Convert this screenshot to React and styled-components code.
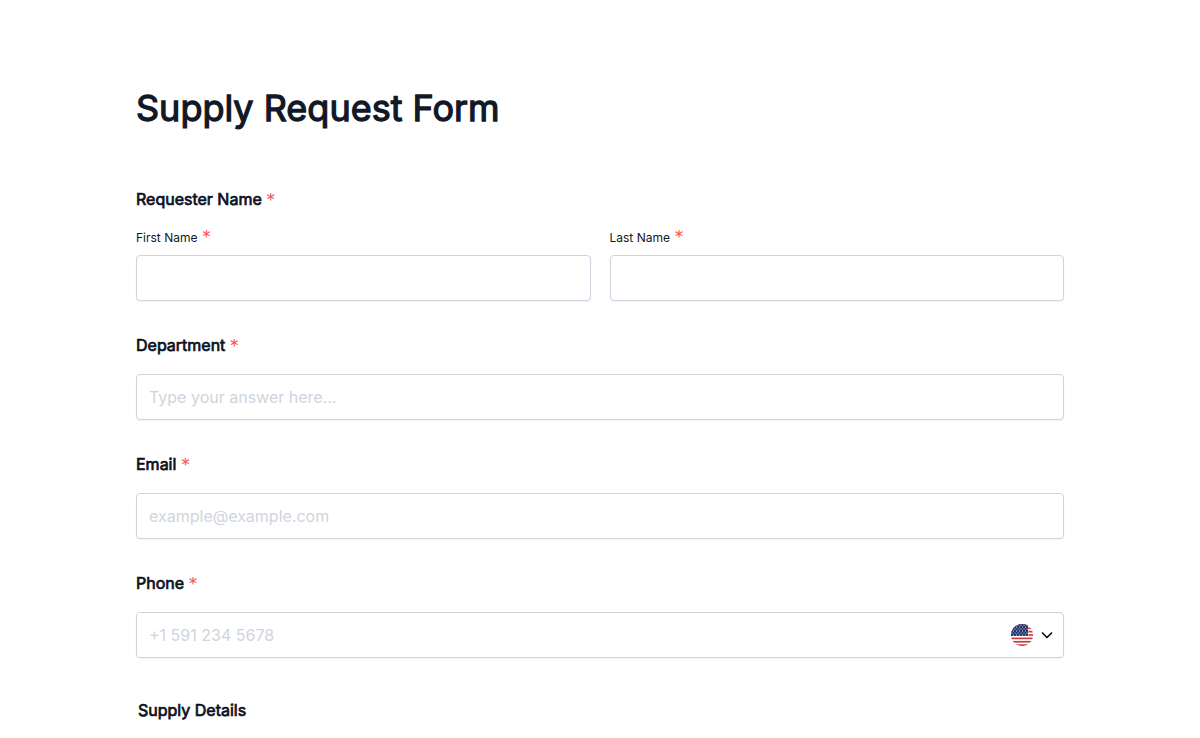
import React, { useState } from 'react'
import styled, { createGlobalStyle } from 'styled-components';

const STAR_ROWS = [1, 3, 5, 7, 9, 11];
const STAR_COLS = [1, 4, 7, 10, 13, 16];

function FlagIcon() {
    return (
        <svg width="22" height="22" viewBox="0 0 22 22" aria-hidden="true">
            <defs>
                <clipPath id="flagCircle">
                    <circle cx="11" cy="11" r="11" />
                </clipPath>
            </defs>
            <g clipPath="url(#flagCircle)">
                <rect width="22" height="22" fill="#fff" />
                {[0, 1, 2, 3, 4, 5, 6].map((n) => (
                    <rect key={n} y={n * 3.385} width="22" height="1.692" fill="#c93a42" />
                ))}
                <rect width="17" height="11.846" fill="#1f3668" />
                {STAR_ROWS.map((y, row) => STAR_COLS.map((x) => (
                    <circle key={`${x}-${y}`} cx={x + (row % 2) * 1.5} cy={y} r="0.6" fill="#fff" />
                )))}
            </g>
        </svg>
    )
}

function Field({ id, label, type = 'text', placeholder, value, onChange }) {
    return (
        <Question>
            <Label htmlFor={id}>{label}<Star>*</Star></Label>
            <Input id={id} type={type} placeholder={placeholder} value={value} onChange={onChange} required />
        </Question>
    )
}

function App() {
    const [form, setForm] = useState({ first: '', last: '', department: '', email: '', phone: '' });

    const changeHandler = (name) => (e) => {
        setForm({ ...form, [name]: e.target.value });
    }

    return (
        <>
            <GlobalStyle />
            <Form>
                <Title>Supply Request Form</Title>
                <NameGroup>
                    <Legend>Requester Name<Star>*</Star></Legend>
                    <NameRow>
                        <NameCell>
                            <SmallLabel htmlFor="first">First Name<Star>*</Star></SmallLabel>
                            <Input id="first" value={form.first} onChange={changeHandler('first')} required />
                        </NameCell>
                        <NameCell>
                            <SmallLabel htmlFor="last">Last Name<Star>*</Star></SmallLabel>
                            <Input id="last" value={form.last} onChange={changeHandler('last')} required />
                        </NameCell>
                    </NameRow>
                </NameGroup>
                <Field id="department" label="Department" placeholder="Type your answer here..."
                    value={form.department} onChange={changeHandler('department')} />
                <Field id="email" label="Email" type="email" placeholder="example@example.com"
                    value={form.email} onChange={changeHandler('email')} />
                <Question>
                    <Label htmlFor="phone">Phone<Star>*</Star></Label>
                    <PhoneBox>
                        <PhoneInput id="phone" type="tel" placeholder="+1 591 234 5678"
                            value={form.phone} onChange={changeHandler('phone')} required />
                        <CountryBtn type="button" aria-label="Country">
                            <FlagIcon />
                            <svg width="12" height="8" viewBox="0 0 12 8" fill="none" aria-hidden="true">
                                <path d="M1.5 2 L6 6.5 L10.5 2" stroke="#111" strokeWidth="1.7" strokeLinecap="round" strokeLinejoin="round" />
                            </svg>
                        </CountryBtn>
                    </PhoneBox>
                </Question>
                <SectionTitle>Supply Details</SectionTitle>
            </Form>
        </>
    );
}

const GlobalStyle = createGlobalStyle`
  * {
    box-sizing: border-box;
  }
  body {
    margin: 0;
    background-color: white;
    color: #111827;
    font-family: Inter, sans-serif;
    font-size: 16px;
    line-height: 24px;
  }
`
const Form = styled.form`
  max-width: 960px;
  margin: 0 auto;
  padding: 84px 16px 16px;
`
const Title = styled.h1`
  margin: 0 0 55px;
  font-size: 36px;
  line-height: 48px;
  font-weight: 400;
  -webkit-text-stroke: 0.035em;
`
const NameGroup = styled.fieldset`
  min-width: 0;
  margin: 0 0 32px;
  padding: 0;
  border: none;
`
const Legend = styled.legend`
  padding: 0;
  margin-bottom: 16px;
  color: #0b1120;
  -webkit-text-stroke: 0.045em;
`
const NameRow = styled.div`
  display: flex;
  gap: 19px;
`
const NameCell = styled.div`
  flex: 1;
  min-width: 0;
`
const Question = styled.div`
  margin-bottom: 32px;
`
const Label = styled.label`
  display: block;
  margin-bottom: 17px;
  color: #0b1120;
  -webkit-text-stroke: 0.045em;
`
const SmallLabel = styled.label`
  display: block;
  height: 24px;
  margin-bottom: 4px;
  font-size: 12px;
  line-height: 22px;
`
const Star = styled.span`
  margin-left: 5px;
  color: #fa5252;
  font-family: "DejaVu Sans", sans-serif;
  font-size: 16px;
  line-height: 1;
  -webkit-text-stroke: 0.01em;
`
const Input = styled.input`
  display: block;
  width: 100%;
  height: 46px;
  padding: 0 12px;
  border: 1px solid #cfd3de;
  border-radius: 4px;
  background-color: white;
  box-shadow: 0 1px 2px rgba(0, 0, 0, 0.05);
  color: inherit;
  font: inherit;
  &::placeholder {
    color: #cfd4de;
  }
`
const PhoneBox = styled.div`
  display: flex;
  height: 46px;
  border: 1px solid #cfd3de;
  border-radius: 4px;
  box-shadow: 0 1px 2px rgba(0, 0, 0, 0.05);
`
const PhoneInput = styled(Input)`
  flex: 1;
  height: 100%;
  border: none;
  box-shadow: none;
`
const CountryBtn = styled.button`
  display: flex;
  align-items: center;
  gap: 8px;
  padding: 0 10px;
  border: none;
  background-color: transparent;
  cursor: pointer;
`
const SectionTitle = styled.h2`
  margin: 40px 2px 0;
  color: #0b1120;
  font-size: 16px;
  line-height: 24px;
  font-weight: 400;
  -webkit-text-stroke: 0.045em;
`

export default App;
